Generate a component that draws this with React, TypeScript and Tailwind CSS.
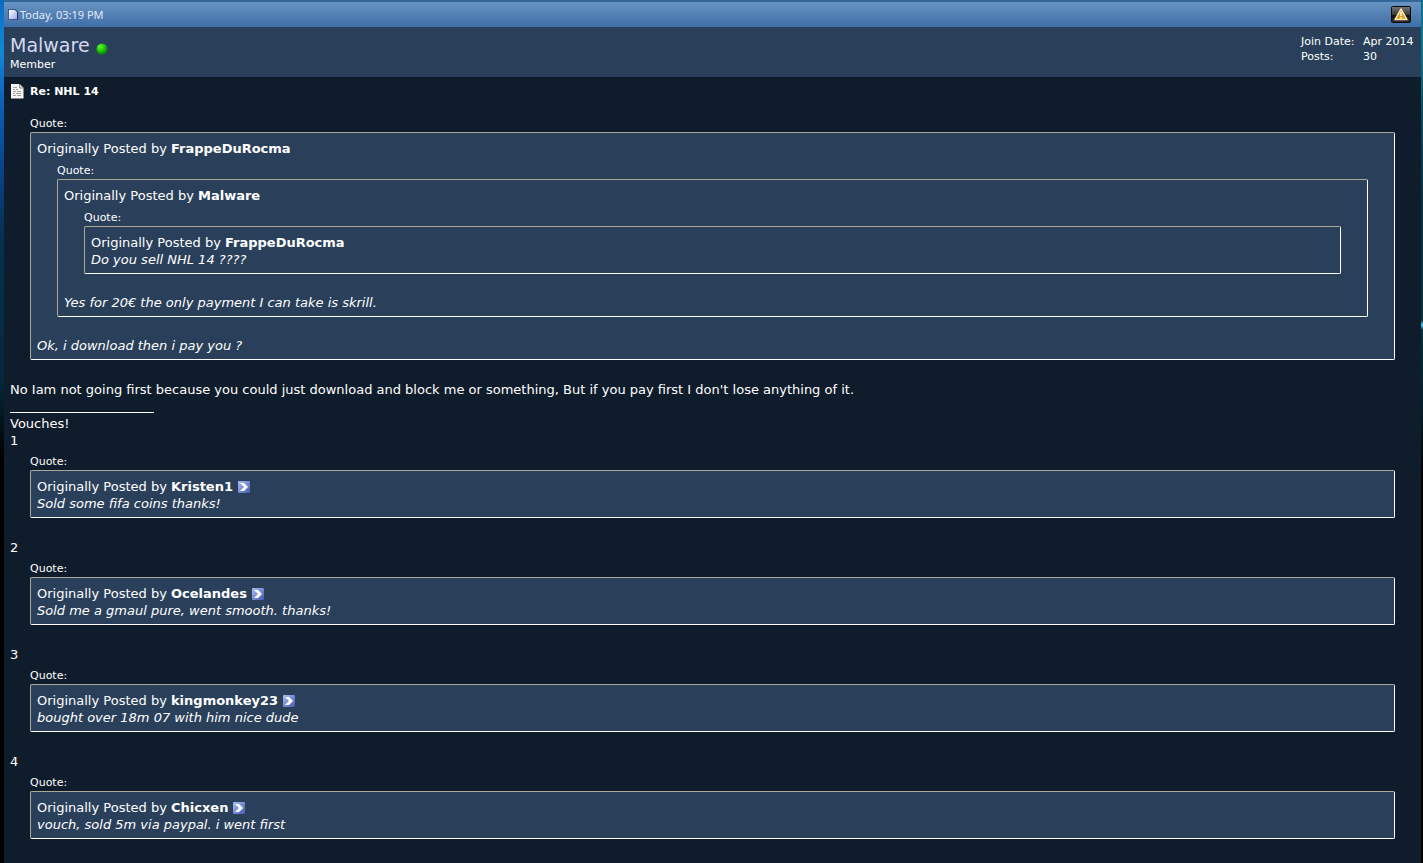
import type { ReactNode } from "react";

const FONT = "font-['DejaVu_Sans',Verdana,sans-serif]";

type Vouch = { user: string; text: string };

const vouches: Vouch[] = [
	{ user: "Kristen1", text: "Sold some fifa coins thanks!" },
	{ user: "Ocelandes", text: "Sold me a gmaul pure, went smooth. thanks!" },
	{ user: "kingmonkey23", text: "bought over 18m 07 with him nice dude" },
	{ user: "Chicxen", text: "vouch, sold 5m via paypal. i went first" },
];

function PostIcon() {
	return (
		<svg width="10" height="11" viewBox="0 0 10 11" aria-hidden="true">
			<defs>
				<linearGradient id="post-icon" x1="0" y1="0" x2="1" y2="1">
					<stop offset="0" stopColor="#ffffff" />
					<stop offset="1" stopColor="#9aa8e4" />
				</linearGradient>
			</defs>
			<path d="M0 0h7l3 3v8H0z" fill="#3c5a94" />
			<path d="M7 0l3 3v8H9V3H7z" fill="#1d2f55" />
			<path d="M1 1h6l2 2v7H1z" fill="url(#post-icon)" />
		</svg>
	);
}

function TitleIcon() {
	return (
		<svg width="14" height="16" viewBox="0 0 14 16" className="shrink-0" aria-hidden="true">
			<path d="M1 1h8.500l4 4v10.500H1z" fill="#f6f6f4" />
			<path d="M9.500 1v4h4" fill="#dcdcd8" stroke="#8c8c88" />
			<path d="M3 4.500h4M3 6.500h2m1 0h2M3 8.500h3m1 0h4M3 10.500h2m1 0h5M3 12.500h3m1 0h4" stroke="#a2a29e" />
		</svg>
	);
}

function OnlineIcon() {
	return (
		<svg width="12" height="12" viewBox="0 0 12 12" aria-label="Online" role="img">
			<defs>
				<radialGradient id="online" cx="0.35" cy="0.3" r="0.7">
					<stop offset="0" stopColor="#6df03c" />
					<stop offset="0.5" stopColor="#25cc0c" />
					<stop offset="1" stopColor="#0b8402" />
				</radialGradient>
			</defs>
			<circle cx="6" cy="6" r="5.500" fill="url(#online)" />
		</svg>
	);
}

function WarningIcon() {
	return (
		<svg width="20" height="17" viewBox="0 0 20 17" aria-hidden="true">
			<defs>
				<linearGradient id="warn-bg" x1="0" y1="0" x2="0" y2="1">
					<stop offset="0" stopColor="#777" />
					<stop offset="0.5" stopColor="#3b3b3b" />
					<stop offset="0.55" stopColor="#101010" />
					<stop offset="1" stopColor="#333" />
				</linearGradient>
			</defs>
			<rect x="0.5" y="0.5" width="19" height="16" rx="1" fill="url(#warn-bg)" stroke="#080808" />
			<path d="M10 3 16 13.500H4z" fill="#dba02c" stroke="#fff0b8" strokeWidth="1.500" strokeLinejoin="round" />
			<path d="M10 6v4m0 1v1.500" stroke="#fffbe8" strokeWidth="1.500" />
		</svg>
	);
}

function ViewPostIcon() {
	return (
		<svg width="12" height="12" viewBox="0 0 12 12" aria-hidden="true">
			<defs>
				<linearGradient id="view-post" x1="0" y1="0" x2="1" y2="1">
					<stop offset="0" stopColor="#a9c3ef" />
					<stop offset="1" stopColor="#4457b5" />
				</linearGradient>
			</defs>
			<rect width="12" height="12" rx="1" fill="url(#view-post)" />
			<path d="M2 2h4l4 4-4 4H2l4-4z" fill="#fff" />
		</svg>
	);
}

function Quote({ user, link, children }: { user: string; link?: boolean; children: ReactNode }) {
	return (
		<div className="mx-5 mt-[5px] mb-5">
			<div className="mb-px pt-px text-[11px] leading-[15px]">Quote:</div>
			<blockquote className="rounded-[2px] border border-t-[#aca899] border-r-white border-b-white border-l-[#aca899] bg-[#2a405a] px-1.5 pt-[7px] pb-[5px]">
				<div className="flex items-center">
					<span>
						Originally Posted by <strong>{user}</strong>
					</span>
					{link && (
						<a href="#post" aria-label={`View post by ${user}`} className="ml-[5px]">
							<ViewPostIcon />
						</a>
					)}
				</div>
				{children}
			</blockquote>
		</div>
	);
}

export default function App() {
	return (
		<div className="flex min-h-screen bg-black">
			<div className="w-1 bg-[linear-gradient(#0b6cc0,#1188dc_50px,#0a5cb4_110px,#0a438a_170px,#06304f_240px,#05283a_380px,#000_460px)]" />
			<article className={`flex-1 bg-[#0f1c2b] text-[13px] leading-[17px] text-white ${FONT}`}>
				<header className="flex h-[27px] items-center justify-between border-t-2 border-[#336699] bg-linear-to-b from-[#6894c2] to-[#3f6ea8] pr-2.5 pl-1">
					<div className="flex items-center gap-0.5 font-['Noto_Sans',Tahoma,sans-serif] text-[11px] text-[#e4e8f4]">
						<PostIcon />
						<time>Today, 03:19 PM</time>
					</div>
					<button type="button" aria-label="Report post">
						<WarningIcon />
					</button>
				</header>

				<section className="flex h-[50px] justify-between bg-[#2a405a] px-1.5 pt-1.5">
					<div>
						<div className="flex items-center gap-1.5 leading-6">
							<a href="#malware" className="text-[19px] text-[#d5d8ed]">Malware</a>
							<span className="pt-2">
								<OnlineIcon />
							</span>
						</div>
						<div className="text-[11px] leading-[15px]">Member</div>
					</div>
					<dl className="grid grid-cols-[58px_52px] content-start gap-x-1 pt-px text-[11px] leading-[15px]">
						<dt>Join Date:</dt>
						<dd>Apr 2014</dd>
						<dt>Posts:</dt>
						<dd>30</dd>
					</dl>
				</section>

				<section className="px-1.5 pt-1.5">
					<h1 className="mb-4 flex h-4 items-center gap-1.5 text-[11px] font-bold">
						<TitleIcon />
						Re: NHL 14
					</h1>

					<Quote user="FrappeDuRocma">
						<Quote user="Malware">
							<Quote user="FrappeDuRocma">
								<em>Do you sell NHL 14 ????</em>
							</Quote>
							<em>Yes for 20€ the only payment I can take is skrill.</em>
						</Quote>
						<em>Ok, i download then i pay you ?</em>
					</Quote>

					<p className="pt-px">
						No Iam not going first because you could just download and block me or something, But if you pay first I
						don't lose anything of it.
					</p>

					<div className="h-[17px] w-36 pt-3.5">
						<hr className="border-white" />
					</div>
					<p>Vouches!</p>
					{vouches.map((v, i) => (
						<div key={v.user}>
							<p className={i === 0 ? "-mb-px" : "-mb-px pt-px"}>{i + 1}</p>
							<Quote user={v.user} link>
								<em>{v.text}</em>
							</Quote>
						</div>
					))}
				</section>
			</article>
			<div className="w-0.5 bg-[linear-gradient(#0a6c88,#0f7a90_40px,#0a4a5c_120px,#06303e_200px,#05303c_320px,#4cc8f0_325px,#05303c_330px,#04202a_400px,#000_480px)]" />
		</div>
	);
}
